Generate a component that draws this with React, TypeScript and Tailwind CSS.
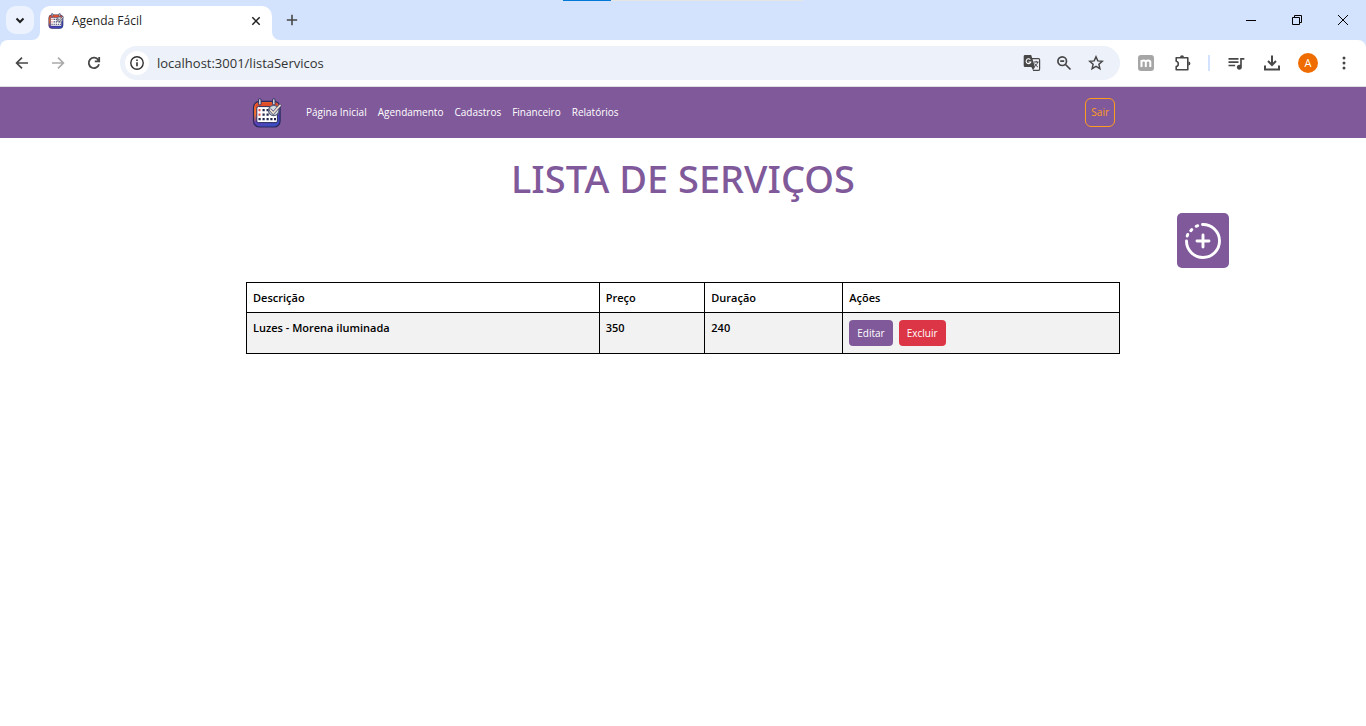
import React from "react";
import { MdQueueMusic } from "react-icons/md";

const font = "font-['Segoe_UI','Open_Sans',sans-serif]";

function CalendarLogo({ size }: { size: number }) {
  return (
    <svg width={size} height={size} viewBox="0 0 30 30" aria-hidden="true">
      <defs>
        <linearGradient id={"cal" + size} x1="0" y1="0" x2="0.6" y2="1">
          <stop offset="0" stopColor="#ff5a1f" />
          <stop offset="0.4" stopColor="#f0742e" />
          <stop offset="0.65" stopColor="#5a3fb8" />
          <stop offset="1" stopColor="#3a4cc0" />
        </linearGradient>
      </defs>
      <rect x="1.500" y="3.400" width="26.600" height="25.600" rx="6" fill={"url(#cal" + size + ")"} stroke="#2b2a5e" strokeWidth="1.200" />
      <path d="M3.500 9.500V8.500a4 4 0 0 1 4-4H22A4 4 0 0 1 26 8.500v1z" fill="#e04e2c" />
      <rect x="4.800" y="8.600" width="20.600" height="16" rx="1.500" fill="#fff" stroke="#2b2a5e" strokeWidth="1" />
      <g fill="#20264d">
        <path d="M10.500 11h2.200v2.200h-2.200zM14.500 11h2.200v2.200h-2.200zM10.500 15.500h2.200v2.200h-2.200zM14.500 15.500h2.200v2.200h-2.200zM6.500 20h2.200v2.200H6.500zM10.500 20h2.200v2.200h-2.200zM14.500 20h2.200v2.200h-2.200zM18.300 20h2.200v2.200h-2.200zM22 20h2v2.200h-2z" />
      </g>
      <path d="M6.500 11h2v2.200h-2zM6.500 15.500h2v2.200h-2z" fill="#e9514a" />
      <g fill="#c9cbd6" stroke="#2b2a5e" strokeWidth="0.900">
        <rect x="6.500" y="0.700" width="2.600" height="6.300" rx="1.300" />
        <rect x="20.500" y="0.700" width="2.600" height="6.300" rx="1.300" />
      </g>
      <circle cx="21.700" cy="12.500" r="5.200" fill="#d5dbe0" stroke="#59607a" strokeWidth="1.200" />
      <path d="M18.500 12l2.700 3L28 7.500" fill="none" stroke="#4b4f70" strokeWidth="3" strokeLinecap="round" />
      <path d="M18.500 12l2.700 3L28 7.500" fill="none" stroke="#f2e2d2" strokeWidth="1.700" strokeLinecap="round" />
    </svg>
  );
}

function Glyph({ children, size = 16, color = "#474747", width = 1.7 }: { children: React.ReactNode; size?: number; color?: string; width?: number }) {
  return (
    <svg width={size} height={size} viewBox="0 0 16 16" fill="none" stroke={color} strokeWidth={width} aria-hidden="true">
      {children}
    </svg>
  );
}

const iconButton = "flex size-5 shrink-0 items-center justify-center";

function TabStrip() {
  return (
    <div className="relative flex h-10 items-end bg-[#d3e3fd]">
      <div className="absolute top-0 left-[563px] flex h-px w-60 bg-[#e5e5e5]">
        <div className="w-12 bg-[#0078d7]" />
      </div>
      <button aria-label="Pesquisar guias" className="mb-1.5 ml-1.5 flex size-7 items-center justify-center rounded-[10px] bg-[#ecf3fe]">
        <Glyph size={16} color="#1f1f1f" width={2}><path d="M4.500 6.500L8 10l3.500-3.500" /></Glyph>
      </button>
      <div className="relative ml-1.5 flex h-[34px] w-58 items-center rounded-t-[10px] bg-white pr-2 pb-1 pl-2">
        <svg className="absolute bottom-0 -left-2" width="8" height="8" aria-hidden="true"><path d="M8 0v8H0a8 8 0 0 0 8-8" fill="#fff" /></svg>
        <svg className="absolute -right-2 bottom-0" width="8" height="8" aria-hidden="true"><path d="M0 0v8h8a8 8 0 0 1-8-8" fill="#fff" /></svg>
        <CalendarLogo size={16} />
        <span className="ml-2 flex-1 text-xs text-[#1f1f1f]">Agenda Fácil</span>
        <button aria-label="Fechar guia" className="flex size-4 items-center justify-center">
          <Glyph color="#1f1f1f" width={1.5}><path d="M4.300 4.300l7.400 7.400M11.700 4.300l-7.400 7.400" /></Glyph>
        </button>
      </div>
      <button aria-label="Nova guia" className="mb-3 ml-3 flex size-4 items-center justify-center">
        <Glyph width={1.6}><path d="M8 2.800v10.400M2.800 8h10.400" /></Glyph>
      </button>
      <div className="ml-auto flex self-stretch">
        <button aria-label="Minimizar" className="flex w-[46px] items-center justify-center">
          <svg width="10" height="10" aria-hidden="true"><path d="M0 5.500h10" stroke="#000" /></svg>
        </button>
        <button aria-label="Restaurar" className="flex w-[46px] items-center justify-center">
          <svg width="10" height="10" fill="none" stroke="#000" aria-hidden="true"><path d="M.500 2.500h7v7h-7zM2.500 2.500v-2h7v7h-2" /></svg>
        </button>
        <button aria-label="Fechar" className="flex w-[46px] items-center justify-center">
          <svg width="10" height="10" stroke="#000" aria-hidden="true"><path d="M0 0l10 10M10 0L0 10" /></svg>
        </button>
      </div>
    </div>
  );
}

function Toolbar() {
  return (
    <div className="bg-[#d3e3fd]">
      <div className="flex h-[47px] items-center rounded-t-lg border-b border-[#dedfdf] bg-white pr-3 pl-3">
        <button aria-label="Voltar" className={iconButton}>
          <Glyph><path d="M14 8H3M8 2.600L2.600 8 8 13.400" /></Glyph>
        </button>
        <button aria-label="Avançar" className={iconButton + " ml-4"}>
          <Glyph color="#ababab"><path d="M2 8h11M8 2.600L13.400 8 8 13.400" /></Glyph>
        </button>
        <button aria-label="Recarregar" className={iconButton + " ml-4"}>
          <Glyph width={1.8}><path d="M13 9.200A5.200 5.200 0 1 1 12.300 5L13 6M13.200 2v4.400H8.800" /></Glyph>
        </button>
        <div className="ml-4 flex h-[34px] flex-1 items-center rounded-full bg-[#ecf1fa] pr-3.5 pl-[5px]">
          <button aria-label="Informações do site" className="flex size-6 items-center justify-center rounded-full bg-white">
            <Glyph width={1.4} color="#303030"><circle cx="8" cy="8" r="6.200" /><path d="M8 7.300v4M8 4.400v1.600" strokeWidth="1.600" /></Glyph>
          </button>
          <input aria-label="Endereço" className="ml-2 min-w-0 flex-1 bg-transparent text-[13px] leading-5 text-[#333333] outline-none" defaultValue="localhost:3001/listaServicos" />
          <div className="flex items-center gap-3">
            <button aria-label="Traduzir" className={iconButton}>
              <svg width="18" height="18" viewBox="0 0 18 18" aria-hidden="true">
                <path d="M7 4.700h8.600a1 1 0 0 1 1 1v9.600a1 1 0 0 1-1 1H10" fill="#f1f3f8" stroke="#474747" strokeWidth="1.200" />
                <path d="M2 1h6.200l3.800 12H2a1.300 1.300 0 0 1-1.300-1.300V2.300A1.300 1.300 0 0 1 2 1z" fill="#474747" />
                <path d="M8.400 13h3.600l-2 3.300z" fill="#474747" />
                <path d="M7.300 5.600A2.400 2.400 0 1 0 7.800 8H5.500" fill="none" stroke="#fff" strokeWidth="1.100" />
                <path d="M10.700 8h5M13.200 6.900V8M14.700 8c-.4 2-1.600 3.500-3 4.500M11.700 9.500c.7 1.500 1.800 2.600 3.200 3.500" fill="none" stroke="#474747" strokeWidth="1" />
              </svg>
            </button>
            <button aria-label="Zoom" className={iconButton}>
              <Glyph><circle cx="6.200" cy="6.200" r="4.300" /><path d="M9.500 9.500l5 5M4.200 6.200h4" /></Glyph>
            </button>
            <button aria-label="Favoritar" className={iconButton}>
              <Glyph width={1.500}><path d="M8 1.800l1.800 4.100 4.500.4-3.400 3 1 4.400L8 11.400l-3.900 2.300 1-4.400-3.400-3 4.500-.4z" /></Glyph>
            </button>
          </div>
        </div>
        <div className="ml-4 flex items-center gap-4">
          <button aria-label="Extensão" className={iconButton}>
            <svg width="16" height="16" viewBox="0 0 16 16" aria-hidden="true">
              <rect width="16" height="16" rx="3" fill="#a6a6a6" />
              <path d="M3.500 12V5M3.500 7.300c0-2.400 4.300-2.400 4.300 0V12M7.800 7.300c0-2.400 4.500-2.400 4.500 0V12" fill="none" stroke="#fff" strokeWidth="2" />
            </svg>
          </button>
          <button aria-label="Extensões" className={iconButton}>
            <svg width="18" height="18" viewBox="0 0 18 18" aria-hidden="true">
              <path d="M3.200 3.700h11.600v12.100H3.200v-3.300c2.800-.6 2.800-4.600 0-5.200z" fill="none" stroke="#474747" strokeWidth="1.600" strokeLinejoin="round" />
              <path d="M7 3.200a2 2 0 0 1 4 0zM15.400 7.600a2 2 0 0 1 0 4z" fill="#474747" />
            </svg>
          </button>
        </div>
        <div className="ml-4 h-4 w-0.5 bg-[#d3e3fd]" />
        <div className="ml-4 flex items-center gap-4">
          <button aria-label="Controles de mídia" className={iconButton}><MdQueueMusic size={20} color="#474747" /></button>
          <button aria-label="Downloads" className={iconButton}>
            <Glyph width={2}><path d="M8 .500v9M4 6l4 4 4-4M1 10.500v4h14v-4" /></Glyph>
          </button>
          <button aria-label="Perfil" className="flex size-5 items-center justify-center rounded-full bg-[#ef6c00] text-[11px] text-white">A</button>
          <button aria-label="Menu" className={iconButton}>
            <svg width="16" height="16" fill="#474747" aria-hidden="true"><circle cx="8" cy="3" r="1.500" /><circle cx="8" cy="8" r="1.500" /><circle cx="8" cy="13" r="1.500" /></svg>
          </button>
        </div>
      </div>
    </div>
  );
}

const links = ["Página Inicial", "Agendamento", "Cadastros", "Financeiro", "Relatórios"];
const cell = "border border-black px-1.5 py-1.5 text-left align-top font-semibold";

export default function App() {
  return (
    <div className={"min-h-screen bg-white " + font}>
      <TabStrip />
      <Toolbar />
      <nav className="bg-[#80599a]">
        <div className="mx-auto flex h-[51px] max-w-[874px] items-center pr-[5px] pl-1.5">
          <a href="#inicio" aria-label="Agenda Fácil"><CalendarLogo size={30} /></a>
          <div className="ml-6 flex gap-[11px] pb-0.5 text-[10px] leading-4 text-white">
            {links.map((l) => <a key={l} href={"#" + l}>{l}</a>)}
          </div>
          <button className="ml-auto h-[29px] rounded-md border border-[#ff9c1b] px-[5px] text-[10px] text-[#ff9c1b]">Sair</button>
        </div>
      </nav>
      <main>
        <h1 className="mt-4 text-center font-['Noto_Sans'] text-[38px] leading-[48px] font-medium text-[#80599a]">LISTA DE SERVIÇOS</h1>
        <div className="mt-[11px] flex justify-end pr-[10%]">
          <button aria-label="Adicionar serviço" className="flex h-[55px] w-13 items-center justify-center rounded-[5px] bg-[#80599a]">
            <svg width="38" height="38" viewBox="0 0 38 38" fill="none" stroke="#fff" strokeWidth="2.900" strokeLinecap="round" aria-hidden="true">
              <path d="M18.500 2.500A16.500 16.500 0 1 1 2.500 19M3.200 14l.5-1.500M6.800 8.700l1-1.200M12.200 4.300l1.500-.6" />
              <path d="M19 13v12M13 19h12" />
            </svg>
          </button>
        </div>
        <table className="mx-auto mt-3.5 w-full max-w-[874px] table-fixed border-collapse text-[11px] leading-[17px] text-black">
          <colgroup>
            <col className="w-[40.4%]" />
            <col className="w-[12.1%]" />
            <col className="w-[15.8%]" />
            <col />
          </colgroup>
          <thead>
            <tr>
              {["Descrição", "Preço", "Duração", "Ações"].map((h) => <th key={h} className={cell}>{h}</th>)}
            </tr>
          </thead>
          <tbody>
            <tr className="bg-[#f2f2f2]">
              <td className={cell}>Luzes - Morena iluminada</td>
              <td className={cell}>350</td>
              <td className={cell}>240</td>
              <td className={cell}>
                <div className="flex gap-1.5 pt-px pb-px text-[10px] font-normal text-white">
                  <button className="h-[26px] rounded-[4px] bg-[#80599a] px-2">Editar</button>
                  <button className="h-[26px] rounded-[4px] bg-[#dc3545] px-2">Excluir</button>
                </div>
              </td>
            </tr>
          </tbody>
        </table>
      </main>
    </div>
  );
}
